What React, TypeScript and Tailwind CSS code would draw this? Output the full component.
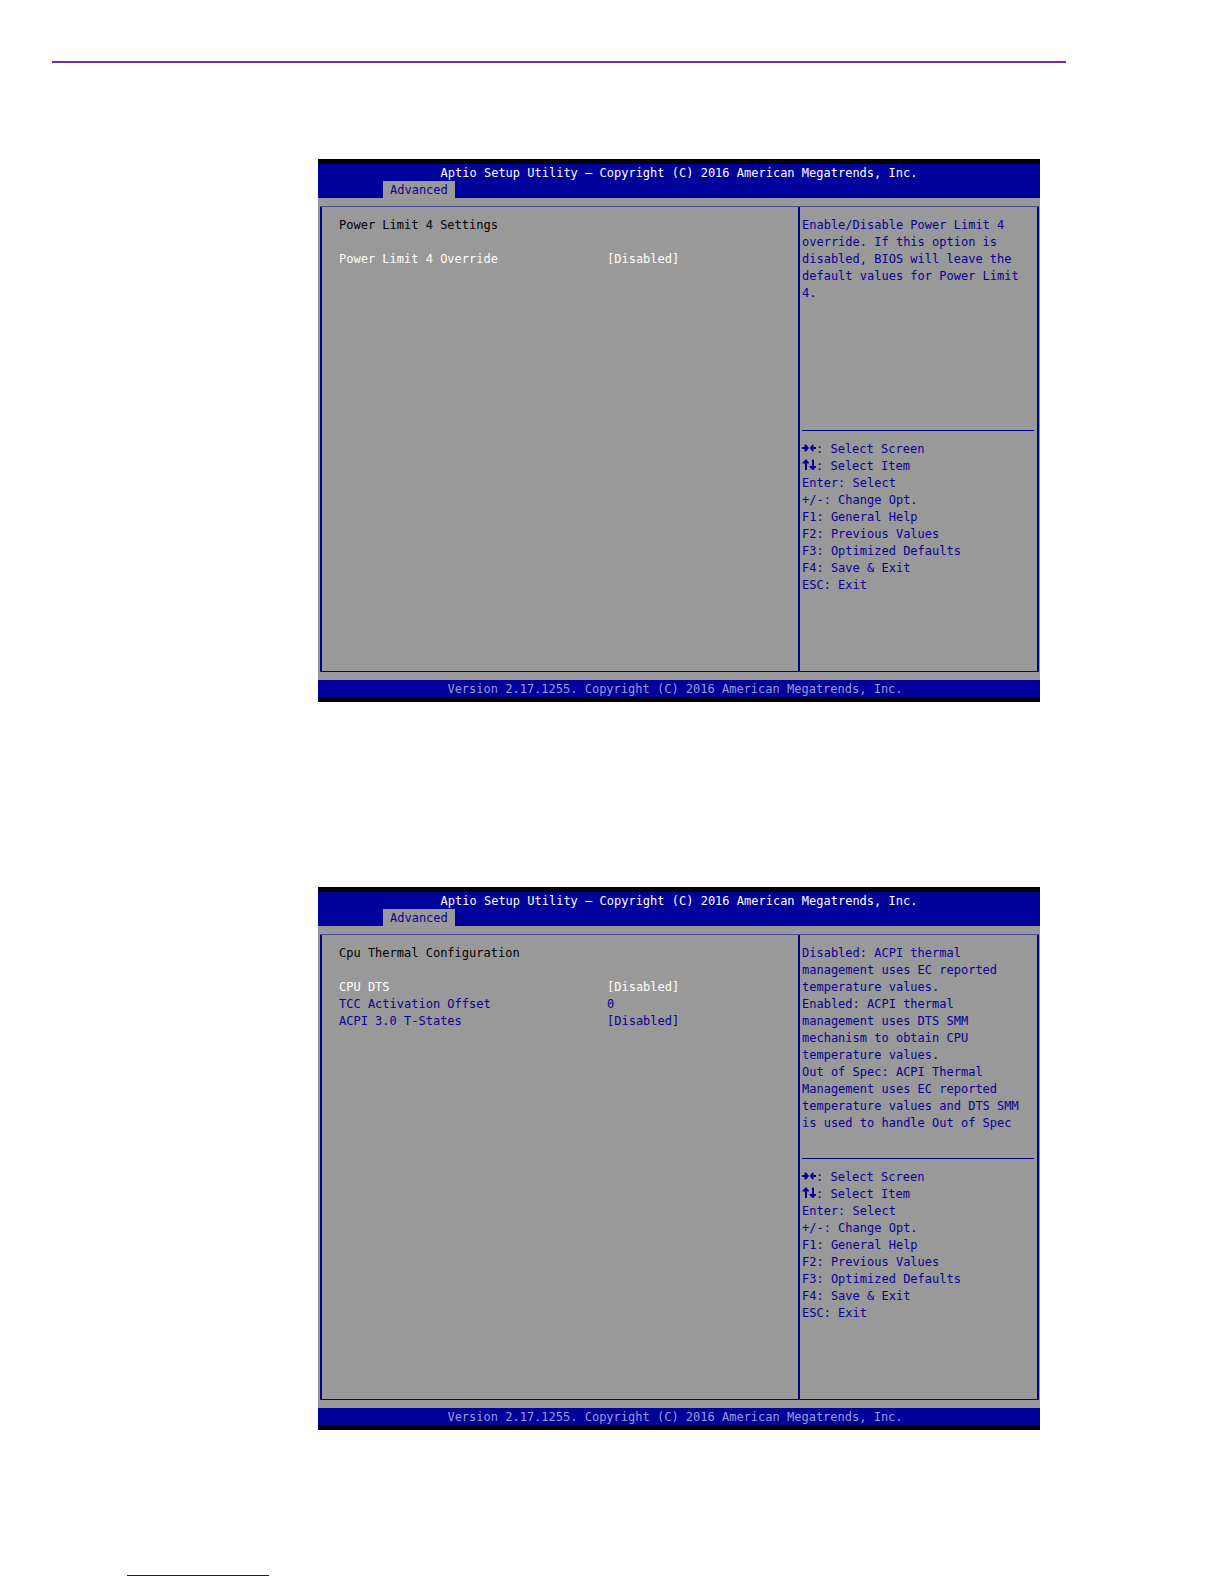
import { useId, useState } from "react";

type Item = {
  label: string;
  value: string;
  kind: "select" | "number";
};

type ScreenProps = {
  title: string;
  items: Item[];
  help: string[];
};

const keys = [
  "Enter: Select",
  "+/-: Change Opt.",
  "F1: General Help",
  "F2: Previous Values",
  "F3: Optimized Defaults",
  "F4: Save & Exit",
  "ESC: Exit",
];

const powerHelp = [
  "Enable/Disable Power Limit 4",
  "override. If this option is",
  "disabled, BIOS will leave the",
  "default values for Power Limit",
  "4.",
];

const thermalHelp = [
  "Disabled: ACPI thermal",
  "management uses EC reported",
  "temperature values.",
  "Enabled: ACPI thermal",
  "management uses DTS SMM",
  "mechanism to obtain CPU",
  "temperature values.",
  "Out of Spec: ACPI Thermal",
  "Management uses EC reported",
  "temperature values and DTS SMM",
  "is used to handle Out of Spec",
];

function LeftRightIcon() {
  return (
    <svg width="14" height="17" viewBox="0 0 14 17" fill="currentColor" aria-hidden="true">
      <path d="M0 6h2.500V3.500H4L7 7 4 10.500H2.500V8H0z" />
      <path d="M14 6h-2.500V3.500H10.500L7.500 7l3 3.500h1V8H14z" />
    </svg>
  );
}

function UpDownIcon() {
  return (
    <svg width="14" height="17" viewBox="0 0 14 17" fill="currentColor" aria-hidden="true">
      <path d="M3 12V5.500H0.500V4.500L3.500 1.500h1l2.500 3v1H5V12z" />
      <path d="M10 1.500V8H7.500v1l3 3h1L14 9V8h-2V1.500z" />
    </svg>
  );
}

// One line of the menu, white while it is the selected one
function SetupItem({ item, active, onFocus }: { item: Item; active: boolean; onFocus: () => void }) {
  const id = useId();
  const [value, setValue] = useState(item.value);

  return (
    <div className={active ? "flex text-white" : "flex text-[#0a0096]"}>
      <label htmlFor={id} className="w-[268px] shrink-0">
        {item.label}
      </label>
      {item.kind === "select" ? (
        <select
          id={id}
          value={value}
          onFocus={onFocus}
          onChange={(e) => setValue(e.target.value)}
          className="h-[17px] appearance-none bg-transparent outline-none"
        >
          <option value="Disabled">[Disabled]</option>
          <option value="Enabled">[Enabled]</option>
        </select>
      ) : (
        <input
          id={id}
          type="text"
          inputMode="numeric"
          value={value}
          onFocus={onFocus}
          onChange={(e) => setValue(e.target.value)}
          className="h-[17px] w-16 bg-transparent outline-none"
        />
      )}
    </div>
  );
}

function SetupScreen({ title, items, help }: ScreenProps) {
  const [selected, setSelected] = useState(0);

  return (
    <section className="mr-[184px] ml-[318px] border-y-5 border-black bg-[#999999] font-['DejaVu_Sans_Mono',monospace] text-xs leading-[17px] text-[#0a0096]">
      <header className="bg-[#00009a] pt-px">
        <h1 className="text-center leading-4 text-white">
          Aptio Setup Utility – Copyright (C) 2016 American Megatrends, Inc.
        </h1>
        <nav className="flex pl-[65px]">
          <button type="button" className="bg-[#999999] px-[7px] pt-px leading-4">
            Advanced
          </button>
        </nav>
      </header>

      <div className="mt-2 mr-px mb-2 ml-0.5 flex min-h-[466px] border-y border-t-[#4a4a9c] border-b-[#00008c]">
        <div className="flex-1 border-l-2 border-[#00008c] pt-2.5 pl-[17px]">
          <h2 className="mb-[17px] text-black">{title}</h2>
          {items.map((item, index) => (
            <SetupItem
              key={item.label}
              item={item}
              active={index === selected}
              onFocus={() => setSelected(index)}
            />
          ))}
        </div>

        <aside className="w-[241px] shrink-0 border-x-2 border-[#00008c] pl-0.5">
          <div className="min-h-[223px] pt-2.5">
            {help.map((line, index) => (
              <p key={index} className="whitespace-nowrap">
                {line}
              </p>
            ))}
          </div>
          <hr className="mr-[3px] border-[#00008c]" />
          <ul className="pt-2.5">
            <li className="flex">
              <LeftRightIcon />: Select Screen
            </li>
            <li className="flex">
              <UpDownIcon />: Select Item
            </li>
            {keys.map((line) => (
              <li key={line}>{line}</li>
            ))}
          </ul>
        </aside>
      </div>

      <footer className="bg-[#00009a] pt-px pr-2 text-center leading-4 text-[#9c9cd6]">
        Version 2.17.1255. Copyright (C) 2016 American Megatrends, Inc.
      </footer>
    </section>
  );
}

export default function App() {
  return (
    <main className="min-h-screen bg-white pt-[61px]">
      <hr className="mr-[158px] mb-24 ml-[52px] border-t-2 border-[#6c2eb0]" />
      <SetupScreen
        title="Power Limit 4 Settings"
        items={[{ label: "Power Limit 4 Override", value: "Disabled", kind: "select" }]}
        help={powerHelp}
      />
      <div className="h-[185px]" />
      <SetupScreen
        title="Cpu Thermal Configuration"
        items={[
          { label: "CPU DTS", value: "Disabled", kind: "select" },
          { label: "TCC Activation Offset", value: "0", kind: "number" },
          { label: "ACPI 3.0 T-States", value: "Disabled", kind: "select" },
        ]}
        help={thermalHelp}
      />
      <hr className="mt-[145px] ml-[127px] w-[142px] border-[#1a0f8c]" />
    </main>
  );
}
